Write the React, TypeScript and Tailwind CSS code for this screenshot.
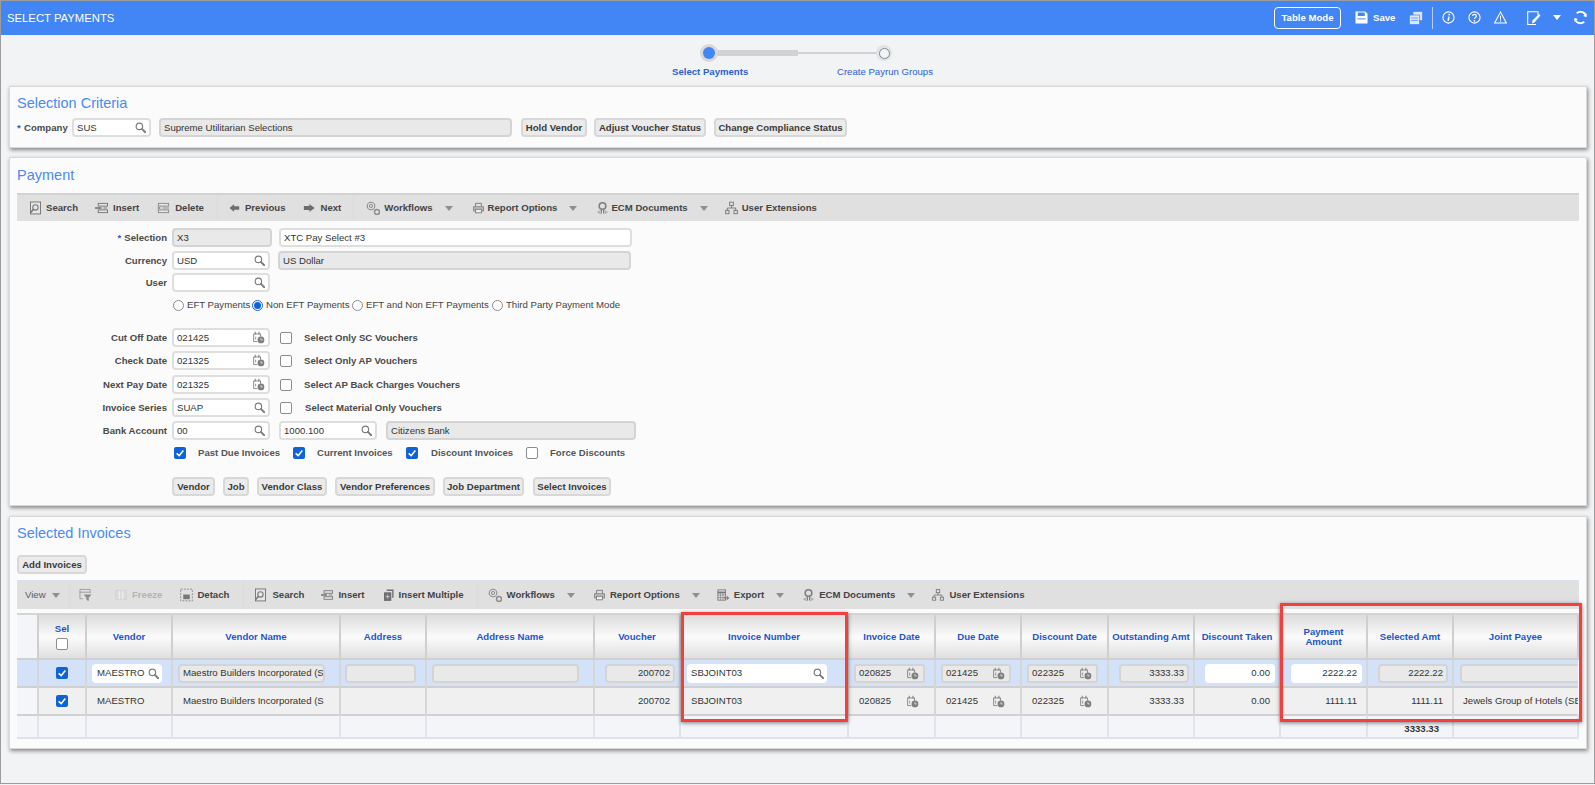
import React from 'react';

const FONT = "font-['Liberation_Sans',Arial,sans-serif]";

type IconProps = { className?: string };

const Mag = ({ className = '' }: IconProps) => (
  <svg viewBox="0 0 14 14" className={`w-[11px] h-[11px] shrink-0 ${className}`} fill="none" stroke="#7d7d7d">
    <circle cx="5.6" cy="5.6" r="4.1" strokeWidth="1.5" />
    <path d="M8.8 8.8 L13 13" strokeWidth="2.4" strokeLinecap="round" />
  </svg>
);

const Cal = ({ className = '' }: IconProps) => (
  <svg viewBox="0 0 16 16" className={`w-[13px] h-[13px] shrink-0 ${className}`} fill="none" stroke="#8a8a8a">
    <path d="M2 3.5 H10.5 V7 M2 3.5 V13 H6.5" strokeWidth="1.2" />
    <path d="M4 1 V4.5 M8.5 1 V4.5" strokeWidth="1.4" />
    <path d="M4.5 7 V10.5" strokeWidth="1.1" />
    <circle cx="11" cy="11" r="4.2" fill="#7f7f7f" stroke="none" />
    <path d="M11 8.8 V11 H13.2" stroke="#e8e8e8" strokeWidth="1" />
  </svg>
);

const ToolIcon = ({ name, size = 'w-[14px]' }: { name: string; size?: string }) => {
  const c = `${size} h-[14px] shrink-0`;
  switch (name) {
    case 'search':
      return (
        <svg viewBox="1.5 0 11.5 14" className={c} fill="none" stroke="#777">
          <rect x="2" y="0.7" width="10.5" height="12.5" fill="#e6e6e6" strokeWidth="1" />
          <circle cx="7.2" cy="6.4" r="2.8" strokeWidth="1.1" />
          <path d="M5 8.6 L1.5 12.5" strokeWidth="1.6" />
        </svg>
      );
    case 'insert':
      return (
        <svg viewBox="0 0 14 14" className={c} fill="none" stroke="#777">
          <rect x="3.5" y="2" width="10" height="3" strokeWidth="1" />
          <rect x="3.5" y="9" width="10" height="3" strokeWidth="1" />
          <path d="M0 7 H7" strokeWidth="1.8" />
          <path d="M9 7 H13" strokeWidth="1" />
        </svg>
      );
    case 'delete':
      return (
        <svg viewBox="0 0 14 14" className={c} fill="none" stroke="#8b8b8b">
          <rect x="1.5" y="2" width="11" height="3" strokeWidth="1" />
          <rect x="1.5" y="9" width="11" height="3" strokeWidth="1" />
          <path d="M0.5 5.5 L4 8.5 M4 5.5 L0.5 8.5 M6 7 H13" strokeWidth="1" />
        </svg>
      );
    case 'prev':
      return (
        <svg viewBox="0 0 14 14" className={c} fill="#6d6d6d">
          <path d="M0.5 7 L6.5 2.2 V4.8 H13 V9.2 H6.5 V11.8 Z" />
        </svg>
      );
    case 'next':
      return (
        <svg viewBox="0 0 14 14" className={c} fill="#6d6d6d">
          <path d="M13.5 7 L7.5 2.2 V4.8 H1 V9.2 H7.5 V11.8 Z" />
        </svg>
      );
    case 'workflows':
      return (
        <svg viewBox="0 0 14 14" className={c} fill="none" stroke="#8c8c8c">
          <circle cx="5" cy="5" r="3.8" strokeWidth="1.1" />
          <circle cx="5" cy="5" r="1.6" strokeWidth="1" />
          <circle cx="11" cy="11" r="2.5" strokeWidth="1.4" />
        </svg>
      );
    case 'print':
      return (
        <svg viewBox="0.5 1 13 12" className={c} fill="none" stroke="#7a7a7a">
          <path d="M3.5 5 V1.5 H10.5 V5" strokeWidth="1.1" />
          <path d="M1 5.5 H13 V10.5 H1 Z" fill="#bdbdbd" strokeWidth="1" />
          <rect x="3.5" y="8.5" width="7" height="4.2" fill="#eee" strokeWidth="1" />
        </svg>
      );
    case 'ecm':
      return (
        <svg viewBox="1 0 12 14" className={c} fill="none" stroke="#7d7d7d">
          <circle cx="7" cy="4.8" r="3.6" strokeWidth="1.7" />
          <path d="M5.8 8.5 V13 M8.2 8.5 V13" strokeWidth="1.2" />
          <path d="M5 9.5 L1.5 11.5 L5 13.5 M9 9.5 L12.5 11.5 L9 13.5" fill="#bbb" stroke="#aaa" strokeWidth="0.8" />
        </svg>
      );
    case 'ext':
      return (
        <svg viewBox="0 0 14 14" className={c} fill="none" stroke="#777" strokeWidth="1">
          <rect x="5" y="0.7" width="4" height="3.6" />
          <rect x="0.7" y="9.5" width="3.6" height="3.6" />
          <rect x="9.7" y="9.5" width="3.6" height="3.6" />
          <path d="M7 4.3 V7 M2.5 9.5 V7 H11.5 V9.5" />
        </svg>
      );
    case 'filter':
      return (
        <svg viewBox="0 0 14 14" className={c} fill="none" stroke="#9a9a9a">
          <path d="M1 1 H12 M1 1 V11 H4 M12 1 V5 M1 4 H12" strokeWidth="1" />
          <path d="M5 6.5 H13.5 L10.5 10 V13.5 L8 12.5 V10 Z" fill="#8c8c8c" stroke="none" />
        </svg>
      );
    case 'freeze':
      return (
        <svg viewBox="0 0 14 14" className={c} fill="#dcdcdc" stroke="#d0d0d0">
          <rect x="1" y="2" width="12" height="10" strokeWidth="1" />
          <path d="M5 2 V12 M9 2 V12" stroke="#f4f4f4" strokeWidth="1" />
        </svg>
      );
    case 'detach':
      return (
        <svg viewBox="0 0 14 14" className={c} fill="none" stroke="#888">
          <rect x="0.7" y="0.7" width="12.6" height="12.6" strokeDasharray="2 1.4" strokeWidth="1" />
          <rect x="3.5" y="6.5" width="7" height="5" fill="#777" stroke="none" />
        </svg>
      );
    case 'multiple':
      return (
        <svg viewBox="2 0 11 14" className={c} fill="#6f6f6f">
          <path d="M5 1 H12.5 V10 H11 V2.5 H5 Z" />
          <rect x="2" y="4" width="8" height="9.5" />
          <path d="M6 6.5 V11 M3.8 8.8 H8.2" stroke="#ddd" strokeWidth="0.8" />
        </svg>
      );
    case 'export':
      return (
        <svg viewBox="0 0 14 14" className={c} fill="none" stroke="#777">
          <rect x="1" y="1" width="9" height="12" strokeWidth="1" />
          <path d="M1 4 H10" strokeWidth="2" />
          <path d="M4 4 V13 M7 4 V13 M1 7 H10 M1 10 H10" strokeWidth="0.7" />
          <path d="M8 10.5 H13.5 M11.5 8.5 L13.5 10.5 L11.5 12.5" strokeWidth="1.2" />
        </svg>
      );
    default:
      return null;
  }
};

const Caret = ({ color = '#8f8f8f' }: { color?: string }) => (
  <svg viewBox="0 0 8 5" className="w-[8px] h-[5px] shrink-0">
    <path d="M0 0 H8 L4 5 Z" fill={color} />
  </svg>
);

const Sep = () => <div className="w-px h-full bg-[#d6dce4] shrink-0" />;

const Tool = ({
  icon,
  label,
  caret,
  dim,
  size,
  lm = 'ml-[5px]',
  gap = 'mr-[18px]',
}: {
  icon: string;
  label: string;
  caret?: boolean;
  dim?: boolean;
  size?: string;
  lm?: string;
  gap?: string;
}) => (
  <div className={`flex items-center ${gap}`}>
    <ToolIcon name={icon} size={size} />
    <span className={`${lm} font-bold whitespace-nowrap ${dim ? 'text-[#b4b4b4]' : 'text-[#444]'}`}>{label}</span>
    {caret && (
      <span className="ml-[12px]">
        <Caret />
      </span>
    )}
  </div>
);

const Input = ({ value, w, ro, icon }: { value?: string; w: string; ro?: boolean; icon?: 'mag' | 'cal' }) => (
  <div
    className={`${w} h-[19px] shrink-0 rounded-[4px] border-2 flex items-center px-[3px] text-[#333] overflow-hidden ${
      ro ? 'bg-[#e9e9e9] border-[#d4d4d4]' : 'bg-white border-[#dedede]'
    }`}
  >
    <span className="flex-1 whitespace-nowrap overflow-hidden">{value}</span>
    {icon === 'mag' && <Mag />}
    {icon === 'cal' && <Cal />}
  </div>
);

const Btn = ({ label, w }: { label: string; w: string }) => (
  <div className={`${w} h-[19px] shrink-0 rounded-[4px] border-2 border-[#d8d8d8] bg-[#ebebeb] flex items-center justify-center font-bold text-[#3a3a3a] whitespace-nowrap`}>
    {label}
  </div>
);

const Check = ({ on, className = '' }: { on?: boolean; className?: string }) =>
  on ? (
    <div className={`w-[12px] h-[12px] shrink-0 rounded-[2px] bg-[#0f62d8] flex items-center justify-center ${className}`}>
      <svg viewBox="0 0 12 12" className="w-[10px] h-[10px]" fill="none" stroke="#fff" strokeWidth="2">
        <path d="M2 6.5 L5 9.2 L10 3" />
      </svg>
    </div>
  ) : (
    <div className={`w-[12px] h-[12px] shrink-0 rounded-[2px] border border-[#8c8c8c] bg-white ${className}`} />
  );

const Radio = ({ on, label, w }: { on?: boolean; label: string; w: string }) => (
  <div className={`flex items-center ${w}`}>
    <div className={`w-[11px] h-[11px] rounded-full border bg-white mr-[3px] flex items-center justify-center ${on ? 'border-[#0f62d8]' : 'border-[#8c8c8c]'}`}>
      {on && <div className="w-[7px] h-[7px] rounded-full bg-[#0f62d8]" />}
    </div>
    <span className="whitespace-nowrap">{label}</span>
  </div>
);

const Row = ({ label, star, mt, children }: { label?: string; star?: boolean; mt: string; children?: React.ReactNode }) => (
  <div className={`flex items-center h-[19px] ${mt}`}>
    <div className="w-[155px] pr-[5px] text-right font-bold text-[#4a4a4a] whitespace-nowrap">
      {star && <span className="text-[#2a5fc9] mr-[3px]">*</span>}
      {label}
    </div>
    {children}
  </div>
);

const Opt = ({ label, ml = 'ml-[12px]' }: { label: string; ml?: string }) => (
  <div className="flex items-center ml-[10px]">
    <Check />
    <span className={`${ml} font-bold text-[#4a4a4a] whitespace-nowrap`}>{label}</span>
  </div>
);

const Card = ({ className, children }: { className: string; children: React.ReactNode }) => (
  <section className={`mx-[9px] w-[1578px] bg-[#fbfbfb] border border-[#d9d9d9] shadow-[1px_2px_4px_rgba(0,0,0,0.45)] ${className}`}>{children}</section>
);

const Title = ({ children }: { children: React.ReactNode }) => (
  <h2 className="text-[14.5px] leading-[18px] text-[#4a8af4] font-normal">{children}</h2>
);

const headCols = [
  { label: 'Vendor', w: 'w-[86px]' },
  { label: 'Vendor Name', w: 'w-[168px]' },
  { label: 'Address', w: 'w-[86px]' },
  { label: 'Address Name', w: 'w-[168px]' },
  { label: 'Voucher', w: 'w-[86px]' },
  { label: 'Invoice Number', w: 'w-[168px]' },
  { label: 'Invoice Date', w: 'w-[87px]' },
  { label: 'Due Date', w: 'w-[86px]' },
  { label: 'Discount Date', w: 'w-[87px]' },
  { label: 'Outstanding Amt', w: 'w-[86px]' },
  { label: 'Discount Taken', w: 'w-[86px]' },
  { label: 'Payment Amount', w: 'w-[87px]' },
  { label: 'Selected Amt', w: 'w-[86px]' },
  { label: 'Joint Payee', w: '' },
];

const td = 'border-r-2 border-[#d6d6d6] p-0 overflow-hidden';

const DateCell = ({ value, boxed }: { value: string; boxed?: boolean }) => (
  <div
    className={`ml-[5px] mr-[9px] h-[19px] flex items-center pl-[3px] pr-[4px] ${
      boxed ? 'rounded-[3px] border-2 border-[#d4d4d4] bg-[#e9e9e9]' : 'border-2 border-transparent'
    }`}
  >
    <span className="flex-1">{value}</span>
    <Cal />
  </div>
);

const Box = ({ value, white, right, m = 'ml-[5px] mr-[9px]' }: { value?: string; white?: boolean; right?: boolean; m?: string }) => (
  <div
    className={`${m} h-[19px] rounded-[4px] border-2 flex items-center px-[3px] whitespace-nowrap overflow-hidden ${right ? 'justify-end' : ''} ${
      white ? 'bg-white border-white' : 'bg-[#e9e9e9] border-[#d4d4d4]'
    }`}
  >
    {value}
  </div>
);

const RIGHT_BOX = 'ml-[10px] mr-[4px]';

export default function App() {
  return (
    <div className={`${FONT} relative w-[1595px] h-[785px] overflow-hidden bg-[#f2f3f5] text-[9.6px] leading-[12px] text-[#333]`}>
      <div className="absolute inset-0 bottom-[1px] border border-[#9c9c9c] pointer-events-none z-20" />
      {/* title bar */}
      <header className="h-[35px] bg-[#4285f4] flex items-center text-white">
        <div className="ml-[7px] text-[11.3px] flex-1">SELECT PAYMENTS</div>
        <div className="w-[67px] h-[22px] rounded-[4px] border border-white flex items-center justify-center font-bold">Table Mode</div>
        <svg viewBox="0 0 14 14" className="w-[13px] h-[13px] ml-[14px]" fill="#fff">
          <path d="M0.5 0.5 H11 L13.5 3 V13.5 H0.5 Z M3 1.5 V5.5 H10.5 V1.5 Z" fillRule="evenodd" />
          <rect x="2.5" y="8" width="9" height="1" fill="#4285f4" />
        </svg>
        <span className="ml-[5px] w-[21px] font-bold">Save</span>
        <svg viewBox="0 0 14 14" className="w-[14px] h-[14px] ml-[15px]" fill="#dbe6fb" stroke="#4285f4" strokeWidth="0.7">
          <rect x="4" y="0.5" width="9.5" height="9" />
          <rect x="0.5" y="4" width="10" height="9.5" />
          <path d="M2 7 H9 M2 9.5 H9" />
        </svg>
        <div className="w-px h-[22px] bg-[#b9d0fb] ml-[9px]" />
        <svg viewBox="0 0 14 14" className="w-[13px] h-[13px] ml-[9px]" fill="none" stroke="#fff">
          <circle cx="7" cy="7" r="6" strokeWidth="1.2" />
          <path d="M7.5 6 L6.6 10.5" strokeWidth="1.6" />
          <circle cx="7.8" cy="3.9" r="1" fill="#fff" stroke="none" />
        </svg>
        <svg viewBox="0 0 14 14" className="w-[13px] h-[13px] ml-[13px]" fill="none" stroke="#fff">
          <circle cx="7" cy="7" r="6" strokeWidth="1.2" />
          <path d="M5 5.4 C5 3 9 3 9 5.4 C9 6.9 7 6.9 7 8.6" strokeWidth="1.3" />
          <circle cx="7" cy="10.6" r="0.9" fill="#fff" stroke="none" />
        </svg>
        <svg viewBox="0 0 14 14" className="w-[13px] h-[13px] ml-[13px]" fill="none" stroke="#fff">
          <path d="M7 1.2 L13.3 12.8 H0.7 Z" strokeWidth="1.1" />
          <path d="M7 5 V9.5 M7 10.3 V11.5" strokeWidth="1.1" />
        </svg>
        <svg viewBox="0 0 14 14" className="w-[14px] h-[14px] ml-[20px]" fill="none" stroke="#fff">
          <path d="M9 13.5 H0.7 V0.7 H11 V4" strokeWidth="1.1" />
          <path d="M5 12.5 L5.5 9.5 L12 3 L13.5 4.5 L7.5 11.5 Z" fill="#fff" stroke="none" />
        </svg>
        <span className="ml-[12px]">
          <Caret color="#fff" />
        </span>
        <svg viewBox="0 0 16 16" className="w-[15px] h-[15px] ml-[12px] mr-[7px]" fill="none" stroke="#fff" strokeWidth="2">
          <path d="M14 7 A6 6 0 0 0 4 3.5 M2 9 A6 6 0 0 0 12 12.5" />
          <path d="M14.5 3.5 L14 7.5 L10.8 6.4 Z M1.5 12.5 L2 8.5 L5.2 9.6 Z" fill="#fff" stroke="none" />
        </svg>
      </header>

      {/* wizard steps */}
      <div className="h-[51px] relative">
        <div className="absolute left-[714px] top-[15px] w-[84px] h-[6px] bg-[#d2d2d2]" />
        <div className="absolute left-[797px] top-[17px] w-[82px] h-[2px] bg-[#d2d2d2]" />
        <div className="absolute left-[700px] top-[9px] w-[18px] h-[18px] rounded-full bg-[#d8d8d8] flex items-center justify-center">
          <div className="w-[12px] h-[12px] rounded-full bg-[#4285f4]" />
        </div>
        <div className="absolute left-[876px] top-[10px] w-[16px] h-[16px] rounded-full bg-[#e2e2e2] flex items-center justify-center">
          <div className="w-[11px] h-[11px] rounded-full bg-[#f4f4f4] border border-[#7b8a9a]" />
        </div>
        <span className="absolute left-[672px] top-[31px] font-bold text-[#2a62cf]">Select Payments</span>
        <span className="absolute left-[837px] top-[31px] text-[#2a62cf]">Create Payrun Groups</span>
      </div>

      {/* selection criteria */}
      <Card className="h-[62px] px-[7px] pt-[7px]">
        <Title>Selection Criteria</Title>
        <div className="flex items-center h-[19px] mt-[6px]">
          <span className="text-[#2a5fc9] w-[7px] font-bold">*</span>
          <span className="font-bold text-[#4a4a4a] w-[48px]">Company</span>
          <Input value="SUS" w="w-[79px]" icon="mag" />
          <div className="w-[8px]" />
          <Input value="Supreme Utilitarian Selections" w="w-[353px]" ro />
          <div className="w-[9px]" />
          <Btn label="Hold Vendor" w="w-[66px]" />
          <div className="w-[7px]" />
          <Btn label="Adjust Voucher Status" w="w-[112px]" />
          <div className="w-[8px]" />
          <Btn label="Change Compliance Status" w="w-[133px]" />
        </div>
      </Card>

      {/* payment */}
      <Card className="h-[349px] mt-[9px] px-[7px] pt-[8px]">
        <Title>Payment</Title>
        <div className="mt-[9px] h-[28px] bg-[#e0e0e0] border-t-2 border-[#d2d2d2] flex items-center pl-[13px]">
          <Tool icon="search" size="w-[11px]" label="Search" gap="mr-[17px]" />
          <Tool icon="insert" size="w-[13px]" label="Insert" />
          <Tool icon="delete" size="w-[13px]" label="Delete" gap="mr-[13px]" />
          <Sep />
          <div className="w-[11px]" />
          <Tool icon="prev" size="w-[11px]" label="Previous" />
          <Tool icon="next" size="w-[12px]" label="Next" gap="mr-[12px]" />
          <Sep />
          <div className="w-[12px]" />
          <Tool icon="workflows" label="Workflows" lm="ml-[4px]" caret gap="mr-[20px]" />
          <Tool icon="print" size="w-[11px]" label="Report Options" lm="ml-[4px]" caret gap="mr-[20px]" />
          <Tool icon="ecm" size="w-[11px]" label="ECM Documents" lm="ml-[3px]" caret gap="mr-[17px]" />
          <Tool icon="ext" size="w-[13px]" label="User Extensions" lm="ml-[4px]" />
        </div>

        <Row label="Selection" star mt="mt-[7px]">
          <Input value="X3" w="w-[100px]" ro />
          <div className="w-[7px]" />
          <Input value="XTC Pay Select #3" w="w-[353px]" />
        </Row>
        <Row label="Currency" mt="mt-[4px]">
          <Input value="USD" w="w-[98px]" icon="mag" />
          <div className="w-[8px]" />
          <Input value="US Dollar" w="w-[353px]" ro />
        </Row>
        <Row label="User" mt="mt-[3px]">
          <Input w="w-[98px]" icon="mag" />
        </Row>
        <div className="flex items-center h-[14px] mt-[6px] ml-[156px] text-[#444]">
          <Radio label="EFT Payments" w="w-[79px]" />
          <Radio on label="Non EFT Payments" w="w-[100px]" />
          <Radio label="EFT and Non EFT Payments" w="w-[140px]" />
          <Radio label="Third Party Payment Mode" w="w-[140px]" />
        </div>
        <Row label="Cut Off Date" mt="mt-[16px]">
          <Input value="021425" w="w-[98px]" icon="cal" />
          <Opt label="Select Only SC Vouchers" />
        </Row>
        <Row label="Check Date" mt="mt-[4px]">
          <Input value="021325" w="w-[98px]" icon="cal" />
          <Opt label="Select Only AP Vouchers" />
        </Row>
        <Row label="Next Pay Date" mt="mt-[5px]">
          <Input value="021325" w="w-[98px]" icon="cal" />
          <Opt label="Select AP Back Charges Vouchers" />
        </Row>
        <Row label="Invoice Series" mt="mt-[4px]">
          <Input value="SUAP" w="w-[98px]" icon="mag" />
          <Opt label="Select Material Only Vouchers" ml="ml-[13px]" />
        </Row>
        <Row label="Bank Account" mt="mt-[4px]">
          <Input value="00" w="w-[98px]" icon="mag" />
          <div className="w-[9px]" />
          <Input value="1000.100" w="w-[98px]" icon="mag" />
          <div className="w-[9px]" />
          <Input value="Citizens Bank" w="w-[250px]" ro />
        </Row>
        <div className="flex items-center h-[14px] mt-[6px] ml-[157px] font-bold text-[#555]">
          <Check on />
          <span className="ml-[12px] w-[95px]">Past Due Invoices</span>
          <Check on />
          <span className="ml-[12px] w-[89px]">Current Invoices</span>
          <Check on />
          <span className="ml-[13px] w-[95px]">Discount Invoices</span>
          <Check />
          <span className="ml-[12px]">Force Discounts</span>
        </div>
        <div className="flex items-center mt-[17px] ml-[155px]">
          <Btn label="Vendor" w="w-[43px]" />
          <div className="w-[8px]" />
          <Btn label="Job" w="w-[26px]" />
          <div className="w-[8px]" />
          <Btn label="Vendor Class" w="w-[70px]" />
          <div className="w-[8px]" />
          <Btn label="Vendor Preferences" w="w-[100px]" />
          <div className="w-[8px]" />
          <Btn label="Job Department" w="w-[81px]" />
          <div className="w-[9px]" />
          <Btn label="Select Invoices" w="w-[78px]" />
        </div>
      </Card>

      {/* selected invoices */}
      <Card className="h-[233px] mt-[10px] px-[7px] pt-[7px]">
        <Title>Selected Invoices</Title>
        <div className="mt-[13px]">
          <Btn label="Add Invoices" w="w-[70px]" />
        </div>
        <div className="mt-[6px] h-[29px] bg-[#e0e0e0] border-t border-[#d6e0f0] flex items-center pl-[8px]">
          <span className="text-[#5c5c5c] w-[21px] mr-[6px]">View</span>
          <Caret />
          <div className="w-[9px]" />
          <Sep />
          <div className="w-[9px]" />
          <ToolIcon name="filter" size="w-[13px]" />
          <div className="w-[23px]" />
          <Tool icon="freeze" size="w-[12px]" label="Freeze" dim />
          <Tool icon="detach" size="w-[13px]" label="Detach" lm="ml-[4px]" gap="mr-[14px]" />
          <Sep />
          <div className="w-[11px]" />
          <Tool icon="search" size="w-[11px]" label="Search" lm="ml-[6px]" gap="mr-[17px]" />
          <Tool icon="insert" size="w-[12px]" label="Insert" gap="mr-[19px]" />
          <Tool icon="multiple" size="w-[10px]" label="Insert Multiple" gap="mr-[13px]" />
          <Sep />
          <div className="w-[10px]" />
          <Tool icon="workflows" label="Workflows" caret gap="mr-[19px]" />
          <Tool icon="print" size="w-[11px]" label="Report Options" caret gap="mr-[17px]" />
          <Tool icon="export" size="w-[12px]" label="Export" caret gap="mr-[19px]" />
          <Tool icon="ecm" size="w-[11px]" label="ECM Documents" caret gap="mr-[17px]" />
          <Tool icon="ext" size="w-[12px]" label="User Extensions" />
        </div>

        <div className="mt-[4px] overflow-hidden border-t-2 border-[#d4d4d4]">
          <table className="table-fixed w-full border-collapse text-[#333]">
            <colgroup>
              <col className="w-[21px]" />
              <col className="w-[48px]" />
              {headCols.map((c) => (
                <col key={c.label} className={c.w} />
              ))}
            </colgroup>
            <thead>
              <tr className="h-[44px] bg-gradient-to-b from-[#dcdcdc] via-[#fbfbfb] to-[#dedede]">
                <th className="border-r-2 border-[#cfcfcf] bg-[#f3f5f9]" />
                <th className="border-r-2 border-[#cfcfcf] p-0 font-bold text-[#1e56c8]">
                  <div>Sel</div>
                  <Check className="mx-auto mt-[3px]" />
                </th>
                {headCols.map((c) => (
                  <th key={c.label} className="border-r-2 border-[#cfcfcf] p-0 font-bold text-[#1e56c8] leading-[10px]">
                    {c.label === 'Payment Amount' ? (
                      <>
                        Payment
                        <br />
                        Amount
                      </>
                    ) : (
                      c.label
                    )}
                  </th>
                ))}
              </tr>
            </thead>
            <tbody>
              <tr className="h-[28px] bg-[#d3e2f9] border-t-2 border-[#d0d0d0]">
                <td className={td} />
                <td className={td}>
                  <Check on className="mx-auto" />
                </td>
                <td className={td}>
                  <div className="ml-[5px] mr-[9px] h-[19px] rounded-[4px] bg-white flex items-center pl-[5px] pr-[3px]">
                    <span className="flex-1">MAESTRO</span>
                    <Mag />
                  </div>
                </td>
                <td className={td}><Box value="Maestro Builders Incorporated (S" m="ml-[5px] mr-[14px]" /></td>
                <td className={td}><Box m="ml-[4px] mr-[9px]" /></td>
                <td className={td}><Box m="ml-[5px] mr-[14px]" /></td>
                <td className={td}><Box value="200702" right m={RIGHT_BOX} /></td>
                <td className={td}>
                  <div className="ml-[6px] mr-[20px] h-[19px] rounded-[4px] bg-white flex items-center pl-[4px] pr-[3px]">
                    <span className="flex-1">SBJOINT03</span>
                    <Mag />
                  </div>
                </td>
                <td className={td}><DateCell value="020825" boxed /></td>
                <td className={td}><DateCell value="021425" boxed /></td>
                <td className={td}><DateCell value="022325" boxed /></td>
                <td className={td}><Box value="3333.33" right m={RIGHT_BOX} /></td>
                <td className={td}><Box value="0.00" right white m={RIGHT_BOX} /></td>
                <td className={td}><Box value="2222.22" right white m={RIGHT_BOX} /></td>
                <td className={td}><Box value="2222.22" right m={RIGHT_BOX} /></td>
                <td className="p-0 overflow-hidden"><div className="ml-[6px] h-[19px] -mr-[10px] rounded-l-[4px] border-2 border-r-0 border-[#d4d4d4] bg-[#e9e9e9]" /></td>
              </tr>
              <tr className="h-[28px] bg-[#f0f0f0] border-t-2 border-b-2 border-[#d0d0d0]">
                <td className={`${td} bg-[#f5f6f9]`} />
                <td className={td}>
                  <Check on className="mx-auto" />
                </td>
                <td className={`${td} pl-[10px]`}>MAESTRO</td>
                <td className={`${td} pl-[10px] whitespace-nowrap`}>Maestro Builders Incorporated (S</td>
                <td className={td} />
                <td className={td} />
                <td className={`${td} text-right pr-[9px]`}>200702</td>
                <td className={`${td} pl-[10px]`}>SBJOINT03</td>
                <td className={td}><DateCell value="020825" /></td>
                <td className={td}><DateCell value="021425" /></td>
                <td className={td}><DateCell value="022325" /></td>
                <td className={`${td} text-right pr-[9px]`}>3333.33</td>
                <td className={`${td} text-right pr-[9px]`}>0.00</td>
                <td className={`${td} text-right pr-[9px]`}>1111.11</td>
                <td className={`${td} text-right pr-[9px]`}>1111.11</td>
                <td className="p-0 pl-[9px] whitespace-nowrap overflow-hidden">Jewels Group of Hotels (SE</td>
              </tr>
              <tr className="h-[23px] bg-[#f3f5f9] border-b-2 border-[#dde3ee]">
                <td className="border-r-2 border-[#dfe4ec]" />
                <td className="border-r-2 border-[#dfe4ec]" />
                {headCols.map((c) => (
                  <td key={c.label} className="border-r-2 border-[#dfe4ec] p-0 pr-[13px] pt-[5px] text-right font-bold align-middle whitespace-nowrap">
                    {c.label === 'Selected Amt' ? '3333.33' : null}
                  </td>
                ))}
              </tr>
            </tbody>
          </table>
        </div>
      </Card>

      {/* red callouts over the grid */}
      <div className="absolute left-[681px] top-[612px] w-[167px] h-[110px] border-[3px] border-[#f43f3f] shadow-[0_1px_4px_rgba(0,0,0,0.5)] pointer-events-none" />
      <div className="absolute left-[1280px] top-[603px] w-[302px] h-[119px] border-[3px] border-[#f43f3f] shadow-[0_1px_4px_rgba(0,0,0,0.5)] pointer-events-none" />
    </div>
  );
}
